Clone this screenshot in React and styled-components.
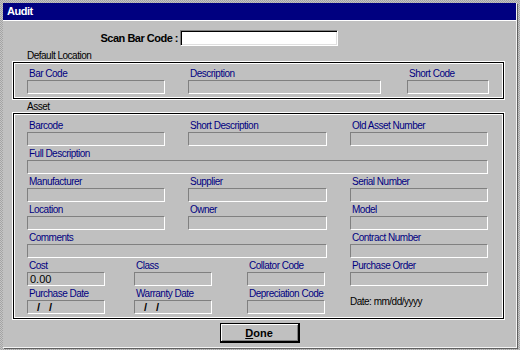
import styled, { createGlobalStyle } from "styled-components";

const GlobalStyle = createGlobalStyle`
  html, body {
    margin: 0;
    padding: 0;
    background: #a8a8a8;
  }
  body {
    font-family: "Liberation Sans", Arial, sans-serif;
    font-size: 10px;
    letter-spacing: -0.5px;
  }
`;

// The dithered desktop border around the dialog
const Screen = styled.div`
  width: 520px;
  height: 350px;
  box-sizing: border-box;
  padding: 3px 3px 2px 3px;
  background: repeating-conic-gradient(#c4c4c4 0 25%, #a4a4a4 0 50%) 0 0 / 2px 2px;
`;

const Window = styled.div`
  height: 100%;
  box-sizing: border-box;
  display: flex;
  flex-direction: column;
  background: #c0c0c0;
  border-right: 1px solid #f4f4f4;
  border-bottom: 1px solid #f4f4f4;
  box-shadow: 1px 1px 0 #606060;
`;

const TitleBar = styled.div`
  height: 17px;
  line-height: 17px;
  padding-left: 4px;
  background: #000080;
  color: #fff;
  font-weight: bold;
  font-size: 11px;
  border-bottom: 1px solid #fff;
`;

const ScanRow = styled.div`
  display: flex;
  align-items: center;
  margin-top: 9px;
`;

const ScanLabel = styled.label`
  width: 177px;
  padding-right: 2px;
  box-sizing: border-box;
  text-align: right;
  font-weight: bold;
  font-size: 11px;
  color: #000;
`;

const ScanInput = styled.input`
  width: 158px;
  height: 16px;
  box-sizing: border-box;
  margin: 0;
  padding: 0 2px;
  background: #fff;
  border-top: 1px solid #808080;
  border-left: 1px solid #808080;
  border-right: 1px solid #fff;
  border-bottom: 1px solid #fff;
  box-shadow: inset 1px 1px 0 #000, inset -1px -1px 0 #dfdfdf;
  outline: none;
  font: inherit;
`;

const Legend = styled.div`
  height: 12px;
  line-height: 12px;
  padding-left: 24px;
  margin-top: ${(p) => p.$top}px;
  color: #000;
`;

const Group = styled.div`
  margin: 0 12px 0 10px;
  padding: ${(p) => p.$pad};
  border: 1px solid #000;
  box-shadow: inset 0 0 0 1px #fff, 0 0 0 1px #fff;
`;

const Grid = styled.div`
  display: grid;
  grid-template-columns: ${(p) => p.$cols};
`;

const Cell = styled.div`
  display: flex;
  flex-direction: column;
  grid-column: ${(p) => p.$span || "auto"};
  padding-bottom: 2px;
`;

const Label = styled.span`
  height: 12px;
  line-height: 12px;
  padding-left: 2px;
  color: #000080;
  white-space: nowrap;
`;

const Field = styled.div`
  width: ${(p) => p.$w}px;
  height: 14px;
  box-sizing: border-box;
  padding-left: ${(p) => (p.$date ? 9 : 2)}px;
  background: #c0c0c0;
  border-top: 1px solid #808080;
  border-left: 1px solid #808080;
  border-right: 1px solid #fff;
  border-bottom: 1px solid #fff;
  line-height: 12px;
  font-size: 11px;
  color: #000;
  font-weight: ${(p) => (p.$date ? "bold" : "normal")};
  letter-spacing: ${(p) => (p.$date ? "3px" : "0")};
`;

const DateHint = styled.span`
  margin-top: 8px;
  line-height: 12px;
  color: #000;
`;

const Footer = styled.div`
  display: flex;
  justify-content: center;
  margin-top: 4px;
`;

const Button = styled.button`
  width: 80px;
  height: 20px;
  margin: 0;
  padding: 0;
  background: #c0c0c0;
  border: 1px solid #000;
  border-right-width: 2px;
  border-bottom-width: 2px;
  box-shadow: inset 1px 1px 0 #fff, inset -1px -1px 0 #808080;
  font-family: inherit;
  font-weight: bold;
  font-size: 11px;
  letter-spacing: 0;
  color: #000;
`;

const Hotkey = styled.span`
  text-decoration: underline;
`;

const Entry = ({ label, w, span, value, date }) => (
  <Cell $span={span}>
    <Label>{label}</Label>
    <Field $w={w} $date={date}>
      {value}
    </Field>
  </Cell>
);

const App = () => {
  return (
    <>
      <GlobalStyle />
      <Screen>
        <Window>
          <TitleBar>Audit</TitleBar>

          <ScanRow>
            <ScanLabel>Scan Bar Code :</ScanLabel>
            <ScanInput type="text" />
          </ScanRow>

          <Legend $top={4}>Default Location</Legend>
          <Group $pad="5px 0 2px 13px">
            <Grid $cols="161px 219px 82px">
              <Entry label="Bar Code" w={138} />
              <Entry label="Description" w={193} />
              <Entry label="Short Code" w={82} />
            </Grid>
          </Group>

          <Legend $top={2}>Asset</Legend>
          <Group $pad="6px 0 2px 13px">
            <Grid $cols="161px 162px 138px">
              <Entry label="Barcode" w={138} />
              <Entry label="Short Description" w={139} />
              <Entry label="Old Asset Number" w={138} />

              <Entry label="Full Description" w={461} span="1 / 4" />

              <Entry label="Manufacturer" w={138} />
              <Entry label="Supplier" w={139} />
              <Entry label="Serial Number" w={138} />

              <Entry label="Location" w={138} />
              <Entry label="Owner" w={139} />
              <Entry label="Model" w={138} />

              <Entry label="Comments" w={300} span="1 / 3" />
              <Entry label="Contract Number" w={138} />
            </Grid>
            <Grid $cols="107px 113px 103px 138px">
              <Entry label="Cost" w={78} value="0.00" />
              <Entry label="Class" w={78} />
              <Entry label="Collator Code" w={78} />
              <Entry label="Purchase Order" w={138} />

              <Entry label="Purchase Date" w={78} value="/ /" date />
              <Entry label="Warranty Date" w={78} value="/ /" date />
              <Entry label="Depreciation Code" w={78} />
              <Cell>
                <DateHint>Date: mm/dd/yyyy</DateHint>
              </Cell>
            </Grid>
          </Group>

          <Footer>
            <Button type="button">
              <Hotkey>D</Hotkey>one
            </Button>
          </Footer>
        </Window>
      </Screen>
    </>
  );
};

export default App;
